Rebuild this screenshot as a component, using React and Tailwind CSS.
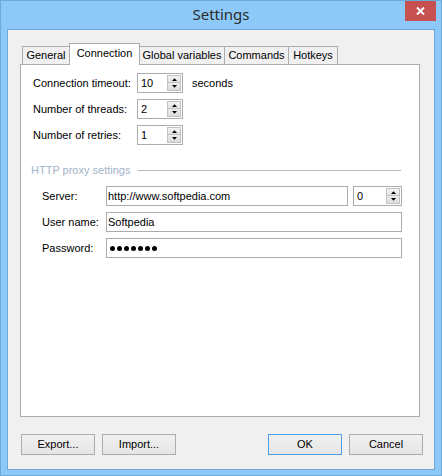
import React from "react";

function Spin({ value, w = "w-[46px]" }) {
  return (
    <div className={`${w} h-[20px] border border-[#acacac] bg-white flex items-center`}>
      <div className="flex-1 pl-[3px] leading-none">{value}</div>
      <div className="flex flex-col w-[14px] h-[16px] mr-[1px]">
        <div className="h-[8px] border border-[#c2c2c2] bg-gradient-to-b from-[#f4f4f4] to-[#e2e2e2] flex items-center justify-center">
          <svg width="5" height="3" viewBox="0 0 5 3"><polygon points="0,3 5,3 2.5,0.2" fill="#000" /></svg>
        </div>
        <div className="h-[8px] border border-t-0 border-[#c2c2c2] bg-gradient-to-b from-[#ececec] to-[#dcdcdc] flex items-center justify-center">
          <svg width="5" height="3" viewBox="0 0 5 3"><polygon points="0,0 5,0 2.5,2.8" fill="#000" /></svg>
        </div>
      </div>
    </div>
  );
}

function TextBox({ children, w }) {
  return (
    <div className={`${w} h-[20px] border border-[#acacac] bg-white flex items-center pl-[1px]`}>
      {children}
    </div>
  );
}

function Btn({ children, def }) {
  return (
    <div
      className={`w-[74px] h-[21px] border ${def ? "border-[#4ea0e8]" : "border-[#acacac]"} bg-gradient-to-b from-[#f0f0f0] to-[#e5e5e5] flex items-center justify-center`}
    >
      {children}
    </div>
  );
}

export default function App() {
  return (
    <div
      className="w-[442px] h-[476px] border border-[#6ea9dc] bg-[#8dc9f8] flex flex-col px-[6px] pb-[5px] text-[11px] text-black relative overflow-hidden"
      style={{ fontFamily: '"Liberation Sans", Arial, sans-serif' }}
    >
      {/* Title bar */}
      <div className="h-[28px] grid grid-cols-[1fr_auto_1fr] -mx-[6px]">
        <div />
        <div
          className="text-[15px] text-[#2b2b2b] flex items-center justify-center pb-[1px]"
          style={{ fontFamily: '"Noto Sans", "Open Sans", sans-serif' }}
        >
          Settings
        </div>
        <div className="flex justify-end items-start pr-[5px]">
          <div className="w-[31px] h-[20px] bg-[#c75050] flex items-center justify-center">
            <svg width="9" height="8" viewBox="0 0 9 8">
              <path d="M1 0.5 L8 7.5 M8 0.5 L1 7.5" stroke="#fff" strokeWidth="2" fill="none" />
            </svg>
          </div>
        </div>
      </div>

      {/* Client */}
      <div className="flex-1 border border-[#74a6d4] bg-[#f0f0f0] flex flex-col pt-[13px]">
        <div className="ml-[12px] flex flex-col">
          {/* Tabs */}
          <div className="flex items-end h-[21px] pl-[2px] relative z-10">
            <div className="w-[48px] h-[18px] border border-b-0 border-[#acacac] bg-[#f0f0f0] flex items-center justify-center">
              General
            </div>
            <div className="w-[71px] h-[22px] -ml-px mb-[-1px] border border-b-0 border-[#acacac] bg-white flex items-center justify-center pb-[3px] relative z-10">
              Connection
            </div>
            <div className="w-[86px] h-[18px] -ml-px border border-b-0 border-[#acacac] bg-[#f0f0f0] flex items-center justify-center">
              Global variables
            </div>
            <div className="w-[65px] h-[18px] -ml-px border border-b-0 border-[#acacac] bg-[#f0f0f0] flex items-center justify-center">
              Commands
            </div>
            <div className="w-[50px] h-[18px] -ml-px border border-b-0 border-[#acacac] bg-[#f0f0f0] flex items-center justify-center">
              Hotkeys
            </div>
          </div>

          {/* Panel */}
          <div className="w-[400px] h-[353px] border border-[#acacac] bg-white pt-[8px] pl-[10px] flex flex-col">
            <div className="flex flex-col gap-[6px] pl-[2px]">
              <div className="flex items-center h-[20px]">
                <div className="w-[104px]">Connection timeout:</div>
                <Spin value="10" />
                <div className="ml-[9px]">seconds</div>
              </div>
              <div className="flex items-center h-[20px]">
                <div className="w-[104px]">Number of threads:</div>
                <Spin value="2" />
              </div>
              <div className="flex items-center h-[20px]">
                <div className="w-[104px]">Number of retries:</div>
                <Spin value="1" />
              </div>
            </div>

            <div className="mt-[18px] flex items-center h-[14px]">
              <div className="text-[#a3b4c9]">HTTP proxy settings</div>
              <div className="flex-1 h-px bg-[#b9b9b9] ml-[8px] mr-[18px]" />
            </div>

            <div className="mt-[9px] pl-[11px] flex flex-col gap-[6px]">
              <div className="flex items-center h-[20px]">
                <div className="w-[64px]">Server:</div>
                <TextBox w="w-[242px]">http://www.softpedia.com</TextBox>
                <div className="ml-[5px]">
                  <Spin value="0" w="w-[49px]" />
                </div>
              </div>
              <div className="flex items-center h-[20px]">
                <div className="w-[64px]">User name:</div>
                <TextBox w="w-[296px]">Softpedia</TextBox>
              </div>
              <div className="flex items-center h-[20px]">
                <div className="w-[64px]">Password:</div>
                <TextBox w="w-[296px]">
                  <div className="flex gap-[2px] pl-[2px]">
                    {[0, 1, 2, 3, 4, 5, 6].map((i) => (
                      <span key={i} className="w-[5px] h-[5px] rounded-full bg-black block" />
                    ))}
                  </div>
                </TextBox>
              </div>
            </div>
          </div>
        </div>

        {/* Buttons */}
        <div className="mt-[17px] flex items-center pl-[13px] pr-[11px]">
          <Btn>Export...</Btn>
          <div className="ml-[7px]">
            <Btn>Import...</Btn>
          </div>
          <div className="flex-1" />
          <Btn def>OK</Btn>
          <div className="ml-[7px]">
            <Btn>Cancel</Btn>
          </div>
        </div>
      </div>
    </div>
  );
}
